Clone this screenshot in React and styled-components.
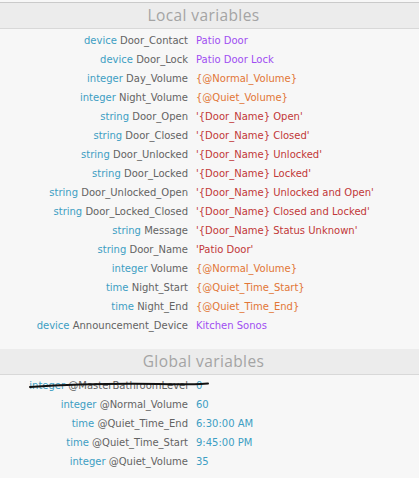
import React from "react";
import styled, { createGlobalStyle } from "styled-components";

const Global = createGlobalStyle`
  html, body { margin: 0; padding: 0; background: #f7f7f7; }
  body { font-family: "DejaVu Sans", Verdana, sans-serif; }
`;

const Page = styled.div`
  padding-top: 2px;
  width: 419px;
`;

const Section = styled.section`
  display: flex;
  flex-direction: column;
`;

const Header = styled.div`
  height: 25px;
  line-height: 25px;
  background: #ececec;
  border-top: ${(p) => (p.$top ? "1px solid #cacaca" : "none")};
  border-bottom: 1px solid #d8d8d8;
  padding-right: 12px;
  text-align: center;
  color: #a4a4a4;
  font-family: "Open Sans", "Noto Sans", sans-serif;
  font-size: 15.5px;
  letter-spacing: 0.4px;
`;

const List = styled.div`
  position: relative;
  display: grid;
  grid-template-columns: 188px 1fr;
  column-gap: 8px;
  padding: ${(p) => p.$pad};
`;

const Label = styled.div`
  text-align: right;
  white-space: nowrap;
  height: 19px;
  line-height: 19px;
  font-size: 10px;
  color: #636363;
`;

const Type = styled.span`
  color: #3d9ec3;
`;

const colors = {
  device: "#a04ef2",
  expr: "#e27636",
  string: "#c23838",
  plain: "#3d9ec3",
};

const Value = styled.div`
  white-space: nowrap;
  height: 19px;
  line-height: 19px;
  font-size: 10px;
  color: ${(p) => colors[p.$kind]};
`;

const Strike = styled.svg`
  position: absolute;
  left: 28px;
  top: 6px;
  width: 182px;
  height: 8px;
  pointer-events: none;
`;

const locals = [
  ["device", "Door_Contact", "Patio Door", "device"],
  ["device", "Door_Lock", "Patio Door Lock", "device"],
  ["integer", "Day_Volume", "{@Normal_Volume}", "expr"],
  ["integer", "Night_Volume", "{@Quiet_Volume}", "expr"],
  ["string", "Door_Open", "'{Door_Name} Open'", "string"],
  ["string", "Door_Closed", "'{Door_Name} Closed'", "string"],
  ["string", "Door_Unlocked", "'{Door_Name} Unlocked'", "string"],
  ["string", "Door_Locked", "'{Door_Name} Locked'", "string"],
  ["string", "Door_Unlocked_Open", "'{Door_Name} Unlocked and Open'", "string"],
  ["string", "Door_Locked_Closed", "'{Door_Name} Closed and Locked'", "string"],
  ["string", "Message", "'{Door_Name} Status Unknown'", "string"],
  ["string", "Door_Name", "'Patio Door'", "string"],
  ["integer", "Volume", "{@Normal_Volume}", "expr"],
  ["time", "Night_Start", "{@Quiet_Time_Start}", "expr"],
  ["time", "Night_End", "{@Quiet_Time_End}", "expr"],
  ["device", "Announcement_Device", "Kitchen Sonos", "device"],
];

const globals = [
  ["integer", "@MasterBathroomLevel", "0"],
  ["integer", "@Normal_Volume", "60"],
  ["time", "@Quiet_Time_End", "6:30:00 AM"],
  ["time", "@Quiet_Time_Start", "9:45:00 PM"],
  ["integer", "@Quiet_Volume", "35"],
];

export default function App() {
  return (
    <Page>
      <Global />
      <Section>
        <Header $top>Local variables</Header>
        <List $pad="2px 0 14px">
          {locals.map(([t, n, v, k]) => (
            <React.Fragment key={n}>
              <Label>
                <Type>{t}</Type> {n}
              </Label>
              <Value $kind={k}>{v}</Value>
            </React.Fragment>
          ))}
        </List>
      </Section>
      <Section>
        <Header>Global variables</Header>
        <List $pad="1px 0 8px">
          {globals.map(([t, n, v]) => (
            <React.Fragment key={n}>
              <Label>
                <Type>{t}</Type> {n}
              </Label>
              <Value $kind="plain">{v}</Value>
            </React.Fragment>
          ))}
          <Strike viewBox="0 0 182 8">
            <path
              d="M2 6 C 40 3.5, 90 2.5, 130 3 S 170 3.5, 180 2.5"
              stroke="#111"
              strokeWidth="2"
              fill="none"
              strokeLinecap="round"
            />
          </Strike>
        </List>
      </Section>
    </Page>
  );
}
